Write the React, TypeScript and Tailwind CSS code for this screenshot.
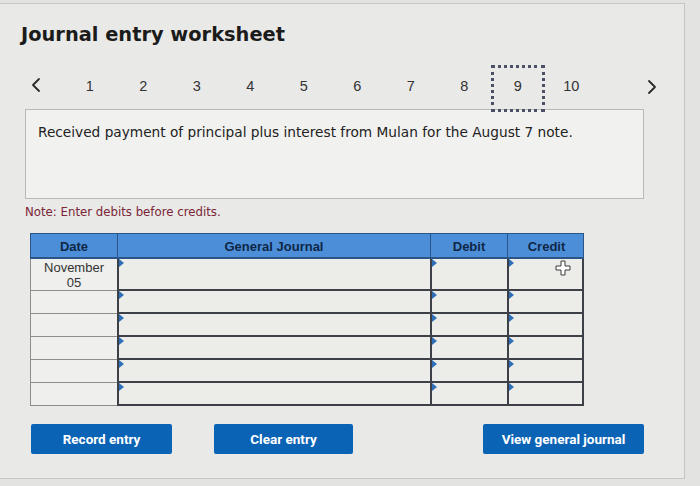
import React from 'react'

const pages = [1, 2, 3, 4, 5, 6, 7, 8, 9, 10]
const rows = [
  { date: ['November', '05'], tall: true },
  { date: null, tall: false },
  { date: null, tall: false },
  { date: null, tall: false },
  { date: null, tall: false },
  { date: null, tall: false },
]

function Flag() {
  return (
    <span className="absolute left-0 top-0 w-0 h-0 border-t-[4px] border-b-[4px] border-l-[5px] border-t-transparent border-b-transparent border-l-[#2f6fb8]" />
  )
}

function InputCell() {
  return (
    <div className="relative bg-[#ecece9] border-l-2 border-b-2 border-[#3d4047]">
      <Flag />
    </div>
  )
}

function PlusCursor() {
  return (
    <svg width="16" height="16" viewBox="0 0 16 16" className="absolute left-[46px] top-[1px]">
      <path d="M6 1h4v5h5v4h-5v5H6v-5H1V6h5z" fill="#ffffff" stroke="#3a3a3a" strokeWidth="1" />
    </svg>
  )
}

function Chevron({ dir }: { dir: 'left' | 'right' }) {
  return (
    <svg width="12" height="16" viewBox="0 0 12 16">
      <path
        d={dir === 'left' ? 'M9 2L3 8l6 6' : 'M3 2l6 6-6 6'}
        fill="none"
        stroke="#2a2a2a"
        strokeWidth="1.8"
        strokeLinecap="round"
        strokeLinejoin="round"
      />
    </svg>
  )
}

export default function App() {
  return (
    <div className="w-[700px] h-[486px] bg-[#e3e3e1] overflow-hidden">
      <div className="ml-[-1px] mt-[3px] w-[686px] h-[476px] border border-[#c6c6c4] bg-[#e9e9e7] relative">
        {/* Title */}
        <h1 className="pl-[21px] pt-[21px] text-[19.4px] font-bold leading-none text-[#1b1b1b] font-['DejaVu_Sans',sans-serif]">
          Journal entry worksheet
        </h1>

        {/* Pager */}
        <div className="mt-[21px] flex items-center font-['Liberation_Sans',Arial,sans-serif] text-[14.5px] text-[#333]">
          <span className="w-[63px] pl-[30px] pb-[8px] flex items-center">
            <Chevron dir="left" />
          </span>
          {pages.map(p => (
            <div
              key={p}
              className={`w-[53.5px] h-[47px] flex items-center justify-center pb-[5px] ${
                p === 9 ? 'border-[3px] border-dotted border-[#4b5066]' : ''
              }`}
            >
              {p}
            </div>
          ))}
          <span className="ml-[48px] pb-[3px] flex items-center">
            <Chevron dir="right" />
          </span>
        </div>

        {/* Description */}
        <div className="ml-[25px] mt-[-3px] w-[619px] h-[90px] border border-[#b9b9b7] bg-[#f1f1ef] px-[12px] pt-[12px] font-['DejaVu_Sans',sans-serif] text-[13.7px] text-[#222]">
          Received payment of principal plus interest from Mulan for the August 7 note.
        </div>

        <p className="ml-[25px] mt-[5px] font-['DejaVu_Sans',sans-serif] text-[11.75px] text-[#7b2638]">
          Note: Enter debits before credits.
        </p>

        {/* Journal table */}
        <div className="ml-[30px] mt-[11px] w-[554px] font-['Liberation_Sans',Arial,sans-serif]">
          <div className="grid grid-cols-[87px_313px_77px_77px] h-[26px] bg-[#4c8fd8] border border-b-2 border-[#2b5488] text-[13px] font-bold text-[#0f2747]">
            <div className="flex items-center justify-center pt-[2px] border-r border-[#2b5488]">Date</div>
            <div className="flex items-center justify-center pt-[2px] border-r border-[#2b5488]">General Journal</div>
            <div className="flex items-center justify-center pt-[2px] border-r border-[#2b5488]">Debit</div>
            <div className="flex items-center justify-center pt-[2px]">Credit</div>
          </div>
          {rows.map((r, i) => (
            <div
              key={i}
              className={`grid grid-cols-[87px_313px_77px_77px] ${r.tall ? 'h-[32px]' : 'h-[23px]'}`}
            >
              <div className="bg-[#efefed] border-l border-b border-[#8d8d8d] flex flex-col items-center justify-center text-[13px] leading-[15px] text-[#333]">
                {r.date && (
                  <>
                    <span>{r.date[0]}</span>
                    <span>{r.date[1]}</span>
                  </>
                )}
              </div>
              <InputCell />
              <InputCell />
              <div className="relative bg-[#ecece9] border-l-2 border-b-2 border-r-2 border-[#3d4047]">
                <Flag />
                {i === 0 && <PlusCursor />}
              </div>
            </div>
          ))}
        </div>

        {/* Buttons */}
        <div className="mt-[18px] flex font-['Roboto',Arial,sans-serif] text-[13.5px] font-bold text-white">
          <button className="ml-[31px] w-[141px] h-[30px] bg-[#0b63b5] rounded-[2px]">Record entry</button>
          <button className="ml-[42px] w-[139px] h-[30px] bg-[#0b63b5] rounded-[2px]">Clear entry</button>
          <button className="ml-[130px] w-[161px] h-[30px] bg-[#0b63b5] rounded-[2px]">View general journal</button>
        </div>
      </div>
    </div>
  )
}
